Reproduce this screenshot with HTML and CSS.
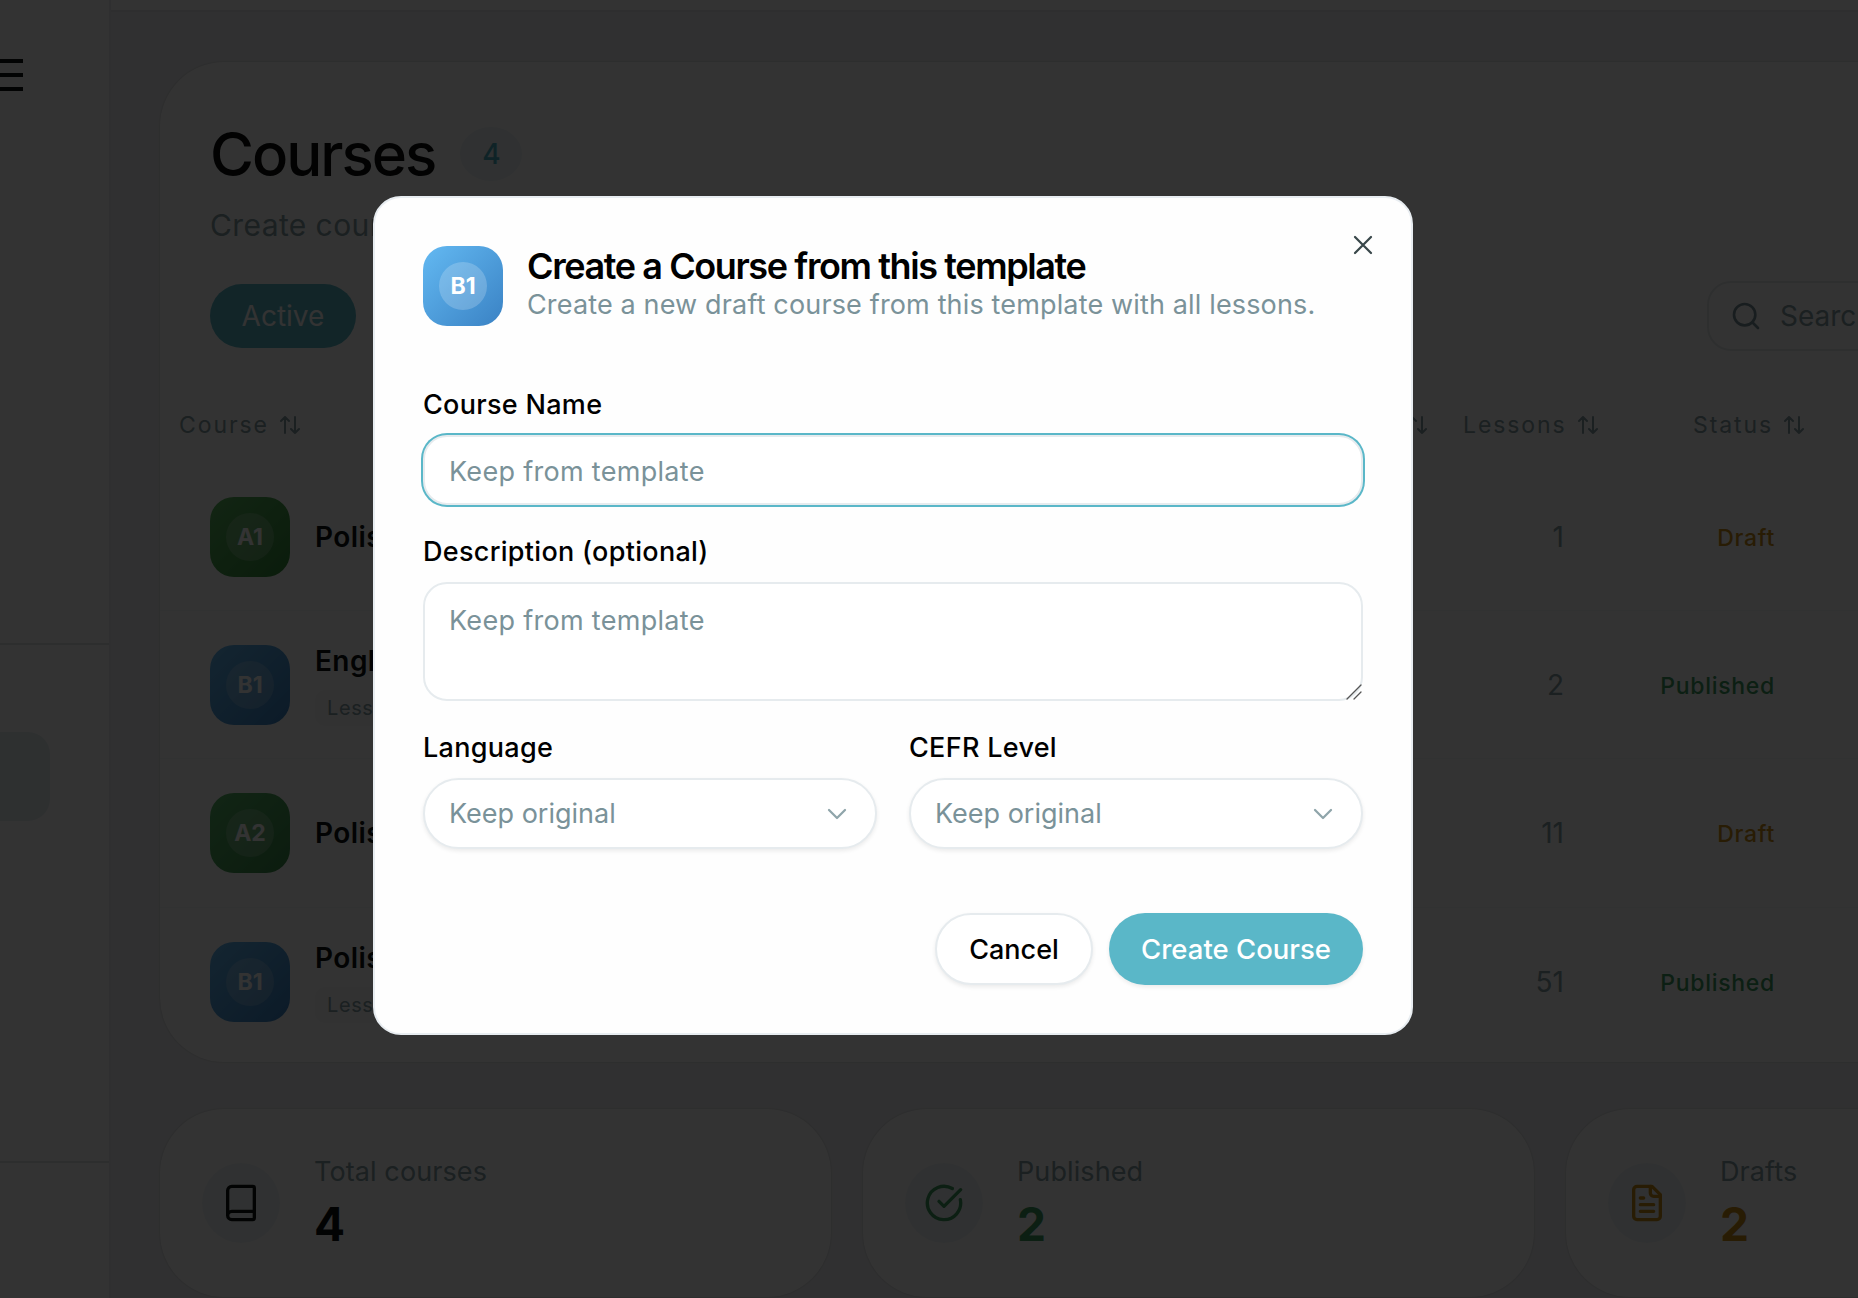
FILE: index.html
```html
<!DOCTYPE html>
<html lang="en">
<head>
    <meta charset="UTF-8">
    <title>Courses</title>
    <link rel="stylesheet" href="styles.css">
</head>
<body>
    <aside class="sidebar">
        <div class="side-top">
            <div class="burger"><span></span><span></span><span></span></div>
        </div>
        <div class="side-nav">
            <div class="nav-item"></div>
        </div>
        <div class="side-foot"></div>
    </aside>

    <div class="main">
        <div class="topbar"></div>
        <div class="content">
            <section class="card">
                <div class="title-row">
                    <h1>Courses</h1>
                    <span class="count">4</span>
                </div>
                <p class="lead">Create courses</p>
                <div class="filters">
                    <span class="pill">Active</span>
                    <div class="search">
                        <svg width="32" height="32" viewBox="0 0 24 24"><circle cx="11" cy="11" r="8"/><path d="m21 21-4.3-4.3"/></svg>
                        <span>Search courses</span>
                    </div>
                </div>
                <div class="table-head">
                    <div class="th">Course <svg class="sort" viewBox="0 0 20 18"><path d="M5 17V1M1 5l4-4 4 4M15 1v16M11 13l4 4 4-4"/></svg></div>
                    <div class="th th-end">Level <svg class="sort" viewBox="0 0 20 18"><path d="M5 17V1M1 5l4-4 4 4M15 1v16M11 13l4 4 4-4"/></svg></div>
                    <div class="th">Lessons <svg class="sort" viewBox="0 0 20 18"><path d="M5 17V1M1 5l4-4 4 4M15 1v16M11 13l4 4 4-4"/></svg></div>
                    <div class="th">Status <svg class="sort" viewBox="0 0 20 18"><path d="M5 17V1M1 5l4-4 4 4M15 1v16M11 13l4 4 4-4"/></svg></div>
                </div>
                <div class="row">
                    <div class="course">
                        <div class="level green"><span>A1</span></div>
                        <div class="course-text"><div class="name">Polish</div></div>
                    </div>
                    <div class="lessons">1</div>
                    <div class="status draft">Draft</div>
                </div>
                <div class="row">
                    <div class="course">
                        <div class="level blue"><span>B1</span></div>
                        <div class="course-text"><div class="name">English</div><div class="chip">Lessons</div></div>
                    </div>
                    <div class="lessons">2</div>
                    <div class="status published">Published</div>
                </div>
                <div class="row">
                    <div class="course">
                        <div class="level green2"><span>A2</span></div>
                        <div class="course-text"><div class="name">Polish</div></div>
                    </div>
                    <div class="lessons">11</div>
                    <div class="status draft">Draft</div>
                </div>
                <div class="row">
                    <div class="course">
                        <div class="level blue"><span>B1</span></div>
                        <div class="course-text"><div class="name">Polish</div><div class="chip">Lessons</div></div>
                    </div>
                    <div class="lessons">51</div>
                    <div class="status published">Published</div>
                </div>
            </section>

            <section class="stats">
                <div class="stat">
                    <div class="stat-icon ink">
                        <svg width="40" height="40" viewBox="0 0 24 24"><path d="M4 19.5v-15A2.5 2.5 0 0 1 6.500 2H19a1 1 0 0 1 1 1v18a1 1 0 0 1-1 1H6.500a1 1 0 0 1 0-5H20"/></svg>
                    </div>
                    <div>
                        <div class="stat-label">Total courses</div>
                        <div class="stat-value ink">4</div>
                    </div>
                </div>
                <div class="stat">
                    <div class="stat-icon published">
                        <svg width="40" height="40" viewBox="0 0 24 24"><path d="M21.800 10A10 10 0 1 1 17 3.340"/><path d="m9 11 3 3L22 4"/></svg>
                    </div>
                    <div>
                        <div class="stat-label">Published</div>
                        <div class="stat-value published">2</div>
                    </div>
                </div>
                <div class="stat">
                    <div class="stat-icon draft">
                        <svg width="40" height="40" viewBox="0 0 24 24"><path d="M15 2H6a2 2 0 0 0-2 2v16a2 2 0 0 0 2 2h12a2 2 0 0 0 2-2V7Z"/><path d="M14 2v4a2 2 0 0 0 2 2h4"/><path d="M10 9H8M16 13H8M16 17H8"/></svg>
                    </div>
                    <div>
                        <div class="stat-label">Drafts</div>
                        <div class="stat-value draft">2</div>
                    </div>
                </div>
            </section>
        </div>
    </div>

    <!-- Create from template dialog -->
    <div class="overlay">
        <div class="modal">
            <button class="close" type="button" aria-label="Close">
                <svg width="32" height="32" viewBox="0 0 24 24"><path d="M18 6 6 18M6 6l12 12"/></svg>
            </button>
            <div class="modal-head">
                <div class="level modal-level blue"><span>B1</span></div>
                <div>
                    <h2>Create a Course from this template</h2>
                    <p>Create a new draft course from this template with all lessons.</p>
                </div>
            </div>
            <form class="form">
                <label for="courseName">Course Name</label>
                <input type="text" id="courseName" class="field focused" placeholder="Keep from template">

                <label for="description" class="spaced">Description (optional)</label>
                <div class="area-wrap">
                    <textarea id="description" class="field area" placeholder="Keep from template"></textarea>
                    <svg class="grip" width="16" height="16" viewBox="0 0 16 16"><path d="M1 15 15 1M8 15l7-7"/></svg>
                </div>

                <div class="two-col">
                    <div>
                        <label>Language</label>
                        <div class="select">
                            <span>Keep original</span>
                            <svg width="32" height="32" viewBox="0 0 24 24"><path d="m6 9 6 6 6-6"/></svg>
                        </div>
                    </div>
                    <div>
                        <label>CEFR Level</label>
                        <div class="select">
                            <span>Keep original</span>
                            <svg width="32" height="32" viewBox="0 0 24 24"><path d="m6 9 6 6 6-6"/></svg>
                        </div>
                    </div>
                </div>

                <div class="actions">
                    <button type="button" class="btn btn-cancel">Cancel</button>
                    <button type="button" class="btn btn-create">Create Course</button>
                </div>
            </form>
        </div>
    </div>
</body>
</html>
```

FILE: styles.css
```css
* {
    box-sizing: border-box;
}
body {
    margin: 0;
    height: 1298px;
    overflow: hidden;
    display: flex;
    font-family: Inter, "Liberation Sans", sans-serif;
    background-color: #eff0f3;
    color: #101517;
}
svg {
    fill: none;
    stroke: currentColor;
    stroke-width: 2;
    stroke-linecap: round;
    stroke-linejoin: round;
    flex-shrink: 0;
}

/* Sidebar */
.sidebar {
    width: 111px;
    flex-shrink: 0;
    display: flex;
    flex-direction: column;
    background: #fff;
    border-right: 2px solid #e8ebed;
    overflow: hidden;
}
.side-top {
    height: 645px;
    padding-top: 59px;
    border-bottom: 2px solid #dfe3e6;
}
.burger {
    width: 23px;
    display: flex;
    flex-direction: column;
    gap: 10px;
}
.burger span {
    height: 4px;
    background: #0c1012;
}
.side-nav {
    height: 518px;
    padding-top: 87px;
    border-bottom: 2px solid #dfe3e6;
}
.nav-item {
    width: 50px;
    height: 89px;
    border-radius: 0 22px 22px 0;
    background: #e6eff1;
}

/* Main column */
.main {
    flex: 1;
    min-width: 0;
}
.topbar {
    height: 12px;
    background: #fff;
    border-bottom: 2px solid #e3e6e8;
}
.content {
    width: 2077px;
    margin-left: 49px;
    padding-top: 50px;
}
.card {
    height: 1000px;
    padding-top: 56px;
    background: #fff;
    border-radius: 64px;
    box-shadow: 0 0 2px rgba(0, 0, 0, 0.2);
}
.title-row {
    display: flex;
    align-items: center;
    gap: 25px;
    padding-left: 50px;
}
h1 {
    margin: 0;
    font-size: 60px;
    line-height: 72px;
    font-weight: 500;
    letter-spacing: -2px;
    color: #0a0d0e;
}
.count {
    width: 62px;
    height: 54px;
    border-radius: 50%;
    display: flex;
    align-items: center;
    justify-content: center;
    font-size: 28px;
    font-weight: 500;
    color: #4cb0c2;
    background: #edf5f7;
}
.lead {
    margin: 15px 0 0 50px;
    font-size: 30px;
    line-height: 40px;
    letter-spacing: 0.4px;
    color: #869fa6;
}
.filters {
    margin-top: 36px;
    height: 70px;
    padding-left: 50px;
    display: flex;
    align-items: center;
}
.pill {
    width: 146px;
    height: 64px;
    border-radius: 32px;
    display: flex;
    align-items: center;
    justify-content: center;
    font-size: 28px;
    color: #fff;
    background: #5ab7c8;
}
.search {
    width: 400px;
    height: 70px;
    margin-left: 1351px;
    padding-left: 21px;
    display: flex;
    align-items: center;
    gap: 18px;
    border: 2px solid #e6eaec;
    border-radius: 24px;
    font-size: 28px;
    color: #869fa6;
}
.search svg {
    color: #7a9299;
}
.table-head {
    margin-top: 59px;
    padding-left: 19px;
    display: grid;
    grid-template-columns: 1094px 190px 230px 300px;
    height: 30px;
}
.th {
    display: flex;
    align-items: center;
    gap: 11px;
    font-size: 23px;
    letter-spacing: 1.9px;
    color: #869fa6;
}
.th-end {
    justify-content: flex-end;
    padding-right: 36px;
}
.sort {
    width: 20px;
    height: 18px;
}
.row {
    height: 148.200px;
    padding-left: 50px;
    display: grid;
    grid-template-columns: 1253px 101px 211px;
    align-items: center;
    border-bottom: 1px solid #f6f7f8;
}
.table-head + .row {
    margin-top: 23px;
}
.row:last-child {
    border-bottom: none;
}
.course {
    display: flex;
    align-items: center;
    gap: 25px;
}
.level {
    width: 80px;
    height: 80px;
    flex-shrink: 0;
    border-radius: 24px;
    display: flex;
    align-items: center;
    justify-content: center;
}
.level span {
    width: 48px;
    height: 48px;
    border-radius: 50%;
    display: flex;
    align-items: center;
    justify-content: center;
    font-size: 23px;
    font-weight: 700;
    color: #fff;
    background: rgba(255, 255, 255, 0.2);
}
.green {
    background: linear-gradient(135deg, #5ab860, #358a3a);
}
.green2 {
    background: linear-gradient(135deg, #58b868, #3a8a4a);
}
.blue {
    background: linear-gradient(135deg, #63b9f2, #3a82c4);
}
.name {
    font-size: 28px;
    line-height: 36px;
    font-weight: 600;
    letter-spacing: 0.4px;
    color: #0c1113;
}
.chip {
    margin-top: 11px;
    height: 36px;
    padding: 0 12px;
    display: flex;
    align-items: center;
    border-radius: 10px;
    background: #f7f9fa;
    font-size: 20px;
    letter-spacing: 0.6px;
    color: #869fa6;
}
.lessons {
    text-align: right;
    font-size: 28px;
    color: #869fa6;
}
.status {
    text-align: right;
    font-size: 23px;
    line-height: 30px;
    padding-top: 2px;
    font-weight: 500;
    letter-spacing: 0.7px;
}
.draft {
    color: #c98a16;
}
.published {
    color: #3d9a5e;
}
.ink {
    color: #0c1113;
}

/* Stat cards */
.stats {
    margin-top: 47px;
    display: grid;
    grid-template-columns: repeat(3, 671px);
    gap: 32px;
}
.stat {
    height: 188px;
    padding-left: 42px;
    display: flex;
    align-items: center;
    gap: 34px;
    background: #fff;
    border-radius: 64px;
    box-shadow: 0 0 2px rgba(0, 0, 0, 0.2);
}
.stat-icon {
    width: 78px;
    height: 80px;
    border-radius: 50%;
    display: flex;
    align-items: center;
    justify-content: center;
    background: #f1f6f7;
}
.stat-label {
    font-size: 27px;
    line-height: 36px;
    letter-spacing: 0.1px;
    color: #869fa6;
}
.stat-value {
    margin-top: 5px;
    font-size: 46px;
    line-height: 58px;
    font-weight: 700;
}

/* Dialog */
.overlay {
    position: fixed;
    inset: 0;
    padding: 196px 72px 0 0;
    display: flex;
    justify-content: center;
    align-items: flex-start;
    background: rgba(0, 0, 0, 0.8);
    backdrop-filter: blur(0.5px);
}
.modal {
    position: relative;
    width: 1040px;
    padding: 48px;
    background: #fefefe;
    border: 2px solid #e8edf1;
    border-radius: 28px;
}
.close {
    position: absolute;
    top: 31px;
    right: 32px;
    padding: 0;
    display: flex;
    border: none;
    background: none;
    color: #39474a;
}
.close svg {
    stroke-width: 1.7;
}
.modal-head {
    display: flex;
    gap: 24px;
}
h2 {
    margin: 0;
    font-size: 36px;
    line-height: 40px;
    font-weight: 600;
    letter-spacing: -1.4px;
    color: #000;
}
.modal-head p {
    margin: 1px 0 0;
    font-size: 27px;
    line-height: 36px;
    letter-spacing: 0.15px;
    color: #7a9299;
}
.form {
    margin-top: 61px;
    display: flex;
    flex-direction: column;
}
label {
    display: block;
    font-size: 27px;
    line-height: 36px;
    font-weight: 500;
    letter-spacing: 0.3px;
    color: #000;
}
.spaced {
    margin-top: 29px;
}
.field {
    display: block;
    width: 100%;
    margin-top: 12px;
    padding: 2px 24px 0;
    font-family: inherit;
    font-size: 27px;
    letter-spacing: 0.3px;
    background: #fff;
    border: 2px solid #e6ebee;
    border-radius: 24px;
    outline: none;
}
.field::placeholder {
    color: #7a9299;
    opacity: 1;
}
.focused {
    height: 70px;
    box-shadow: 0 0 0 2px #5ab7c8;
}
.area-wrap {
    position: relative;
}
.area {
    height: 119px;
    margin-top: 12px;
    padding-top: 20px;
    line-height: 34px;
    resize: none;
}
.grip {
    position: absolute;
    right: 1px;
    bottom: 1px;
    stroke-width: 1.3;
    color: #555;
}
.two-col {
    margin-top: 29px;
    display: grid;
    grid-template-columns: 1fr 1fr;
    gap: 32px;
}
.select {
    height: 71px;
    margin-top: 12px;
    padding: 0 22px 0 24px;
    display: flex;
    align-items: center;
    justify-content: space-between;
    font-size: 27px;
    color: #7a9299;
    background: #fff;
    border: 2px solid #e6ebee;
    border-radius: 36px;
    box-shadow: 0 2px 4px rgba(0, 0, 0, 0.08);
}
.select svg {
    stroke-width: 1.700;
    color: #8fa5aa;
}
.actions {
    margin-top: 64px;
    display: flex;
    justify-content: flex-end;
    gap: 16px;
}
.btn {
    height: 72px;
    padding: 0;
    font-family: inherit;
    font-weight: 500;
    border-radius: 36px;
    cursor: pointer;
}
.btn-cancel {
    width: 158px;
    font-size: 27px;
    color: #000;
    background: #fff;
    border: 2px solid #e6ebee;
    box-shadow: 0 2px 4px rgba(0, 0, 0, 0.08);
}
.btn-create {
    width: 254px;
    font-size: 27.500px;
    color: #fff;
    background: #5ab7c8;
    border: none;
    box-shadow: 0 2px 4px rgba(0, 0, 0, 0.08);
}
```
